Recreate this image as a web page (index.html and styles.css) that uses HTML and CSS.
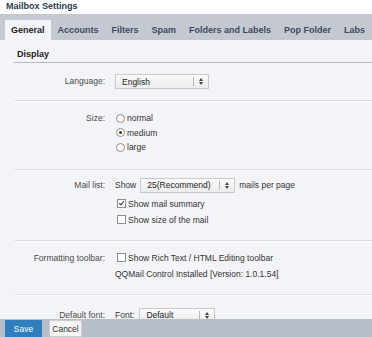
FILE: index.html
```html
<!DOCTYPE html>
<html lang="en">
<head>
    <meta charset="UTF-8">
    <meta name="viewport" content="width=device-width, initial-scale=1.0">
    <title>Mailbox Settings</title>
    <link rel="stylesheet" href="styles.css">
</head>
<body>
    <div class="page-title">Mailbox Settings</div>

    <div class="tabs">
        <div class="tab active">General</div>
        <div class="tab">Accounts</div>
        <div class="tab">Filters</div>
        <div class="tab">Spam</div>
        <div class="tab">Folders and Labels</div>
        <div class="tab">Pop Folder</div>
        <div class="tab">Labs</div>
    </div>

    <div class="panel">
        <h2 class="section-title">Display</h2>

        <div class="row row-language">
            <div class="label">Language:</div>
            <div class="controls">
                <div class="select lang-select">
                    <span class="select-text">English</span>
                    <span class="select-arrow">
                        <svg width="4" height="7" viewBox="0 0 4 7"><path d="M0 3 L2 0 L4 3 Z M0 4 L2 7 L4 4 Z" fill="#444"/></svg>
                    </span>
                </div>
            </div>
        </div>

        <div class="row row-size">
            <div class="label">Size:</div>
            <div class="controls">
                <div class="option"><span class="radio"></span>normal</div>
                <div class="option"><span class="radio checked"></span>medium</div>
                <div class="option"><span class="radio"></span>large</div>
            </div>
        </div>

        <div class="row row-maillist">
            <div class="label">Mail list:</div>
            <div class="controls">
                <div class="inline-line">
                    <span>Show</span>
                    <div class="select count-select">
                        <span class="select-text">25(Recommend)</span>
                        <span class="select-arrow">
                            <svg width="4" height="7" viewBox="0 0 4 7"><path d="M0 3 L2 0 L4 3 Z M0 4 L2 7 L4 4 Z" fill="#444"/></svg>
                        </span>
                    </div>
                    <span>mails per page</span>
                </div>
                <div class="check-line first"><span class="checkbox checked"></span>Show mail summary</div>
                <div class="check-line"><span class="checkbox"></span>Show size of the mail</div>
            </div>
        </div>

        <div class="row row-toolbar">
            <div class="label">Formatting toolbar:</div>
            <div class="controls">
                <div class="check-line"><span class="checkbox"></span>Show Rich Text / HTML Editing toolbar</div>
                <div class="note">QQMail Control Installed [Version: 1.0.1.54]</div>
            </div>
        </div>

        <div class="row row-font">
            <div class="label">Default font:</div>
            <div class="controls">
                <div class="inline-line">
                    <span>Font:</span>
                    <div class="select font-select">
                        <span class="select-text">Default</span>
                        <span class="select-arrow">
                            <svg width="4" height="7" viewBox="0 0 4 7"><path d="M0 3 L2 0 L4 3 Z M0 4 L2 7 L4 4 Z" fill="#444"/></svg>
                        </span>
                    </div>
                </div>
            </div>
        </div>
    </div>

    <div class="footer">
        <button class="save-btn">Save</button>
        <button class="cancel-btn">Cancel</button>
    </div>
</body>
</html>
```

FILE: styles.css
```css
body {
    font-family: "Liberation Sans", Arial, sans-serif;
    font-size: 8.5px;
    color: #333;
    margin: 0;
    padding: 0;
    height: 100vh;
    display: flex;
    flex-direction: column;
    overflow: hidden;
    background-color: #ffffff;
}

.page-title {
    height: 14px;
    line-height: 12px;
    padding-left: 6px;
    font-size: 9px;
    font-weight: bold;
    color: #2c3a52;
}

.tabs {
    display: flex;
    gap: 1px;
    height: 20px;
    padding: 6px 0 0 5px;
    background-color: #c4c9d1;
    white-space: nowrap;
}

.tab {
    padding: 0 6px;
    line-height: 20px;
    font-size: 9px;
    font-weight: bold;
    color: #3e4a5d;
}

.tab.active {
    background-color: #f3f4f7;
    color: #222;
}

.panel {
    flex: 1;
    overflow: hidden;
    padding-left: 14px;
    background-color: #f3f4f7;
}

.section-title {
    margin: 0;
    padding: 6px 3px 0;
    line-height: 16px;
    font-size: 9px;
    font-weight: bold;
    color: #222;
    border-bottom: 1px solid #b9bbbf;
}

.row {
    display: grid;
    grid-template-columns: 91px 1fr;
    column-gap: 10px;
    border-bottom: 1px solid #dcdee3;
    box-shadow: 0 1px 0 #fbfbfc;
}

.label {
    text-align: right;
    line-height: 15px;
    color: #4a4a4a;
}

.row-language {
    padding: 11px 0 11px;
}

.row-size {
    padding: 10px 0 14px;
}

.row-maillist {
    padding: 8px 0 12px;
}

.row-toolbar {
    padding: 9px 0 12px;
}

.row-toolbar .label {
    line-height: 16px;
}

.row-font {
    padding: 13px 0 10px;
    border-bottom: none;
    box-shadow: none;
}

.controls {
    display: flex;
    flex-direction: column;
    align-items: flex-start;
}

.select {
    display: flex;
    align-items: center;
    height: 13px;
    border: 1px solid #c9cacc;
    background: linear-gradient(#fbfbfb, #ececec);
    color: #222;
}

.select-text {
    flex: 1;
    padding-left: 6px;
    white-space: nowrap;
}

.select-arrow {
    display: flex;
    align-items: center;
    justify-content: center;
    width: 14px;
    height: 9px;
    border-left: 1px solid #b9b9b9;
}

.lang-select {
    width: 92px;
}

.count-select {
    width: 93px;
}

.font-select {
    width: 74px;
    margin-left: 1px;
}

.option {
    display: flex;
    align-items: center;
    line-height: 14.5px;
    margin-left: 1px;
}

.radio {
    width: 7px;
    height: 7px;
    margin-right: 2px;
    border: 1px solid #8c8c8c;
    border-radius: 50%;
    background-color: #fff;
    display: flex;
    align-items: center;
    justify-content: center;
}

.radio.checked::after {
    content: "";
    width: 3px;
    height: 3px;
    border-radius: 50%;
    background-color: #333;
}

.inline-line {
    display: flex;
    align-items: center;
    gap: 4px;
    line-height: 15px;
}

.check-line {
    display: flex;
    align-items: center;
    line-height: 16px;
    margin-left: 2px;
}

.check-line.first {
    margin-top: 3px;
}

.checkbox {
    position: relative;
    width: 7px;
    height: 7px;
    margin-right: 2px;
    border: 1px solid #8f8f8f;
    background-color: #fff;
}

.checkbox.checked::after {
    content: "";
    position: absolute;
    left: 2px;
    top: 0;
    width: 2px;
    height: 4px;
    border-right: 1px solid #333;
    border-bottom: 1px solid #333;
    transform: rotate(40deg);
}

.note {
    line-height: 16px;
}

.footer {
    display: flex;
    gap: 7px;
    height: 17px;
    padding: 1px 0 0 5px;
    background-color: #b8bec8;
}

button {
    font-family: "Liberation Sans", Arial, sans-serif;
    font-size: 8.5px;
    height: 17px;
    padding: 0;
    cursor: pointer;
}

.save-btn {
    width: 37px;
    border: none;
    background-color: #2f7ec0;
    color: #fff;
}

.cancel-btn {
    width: 33px;
    border: 1px solid #c9ccd1;
    background-color: #f5f5f5;
    color: #333;
}
```
